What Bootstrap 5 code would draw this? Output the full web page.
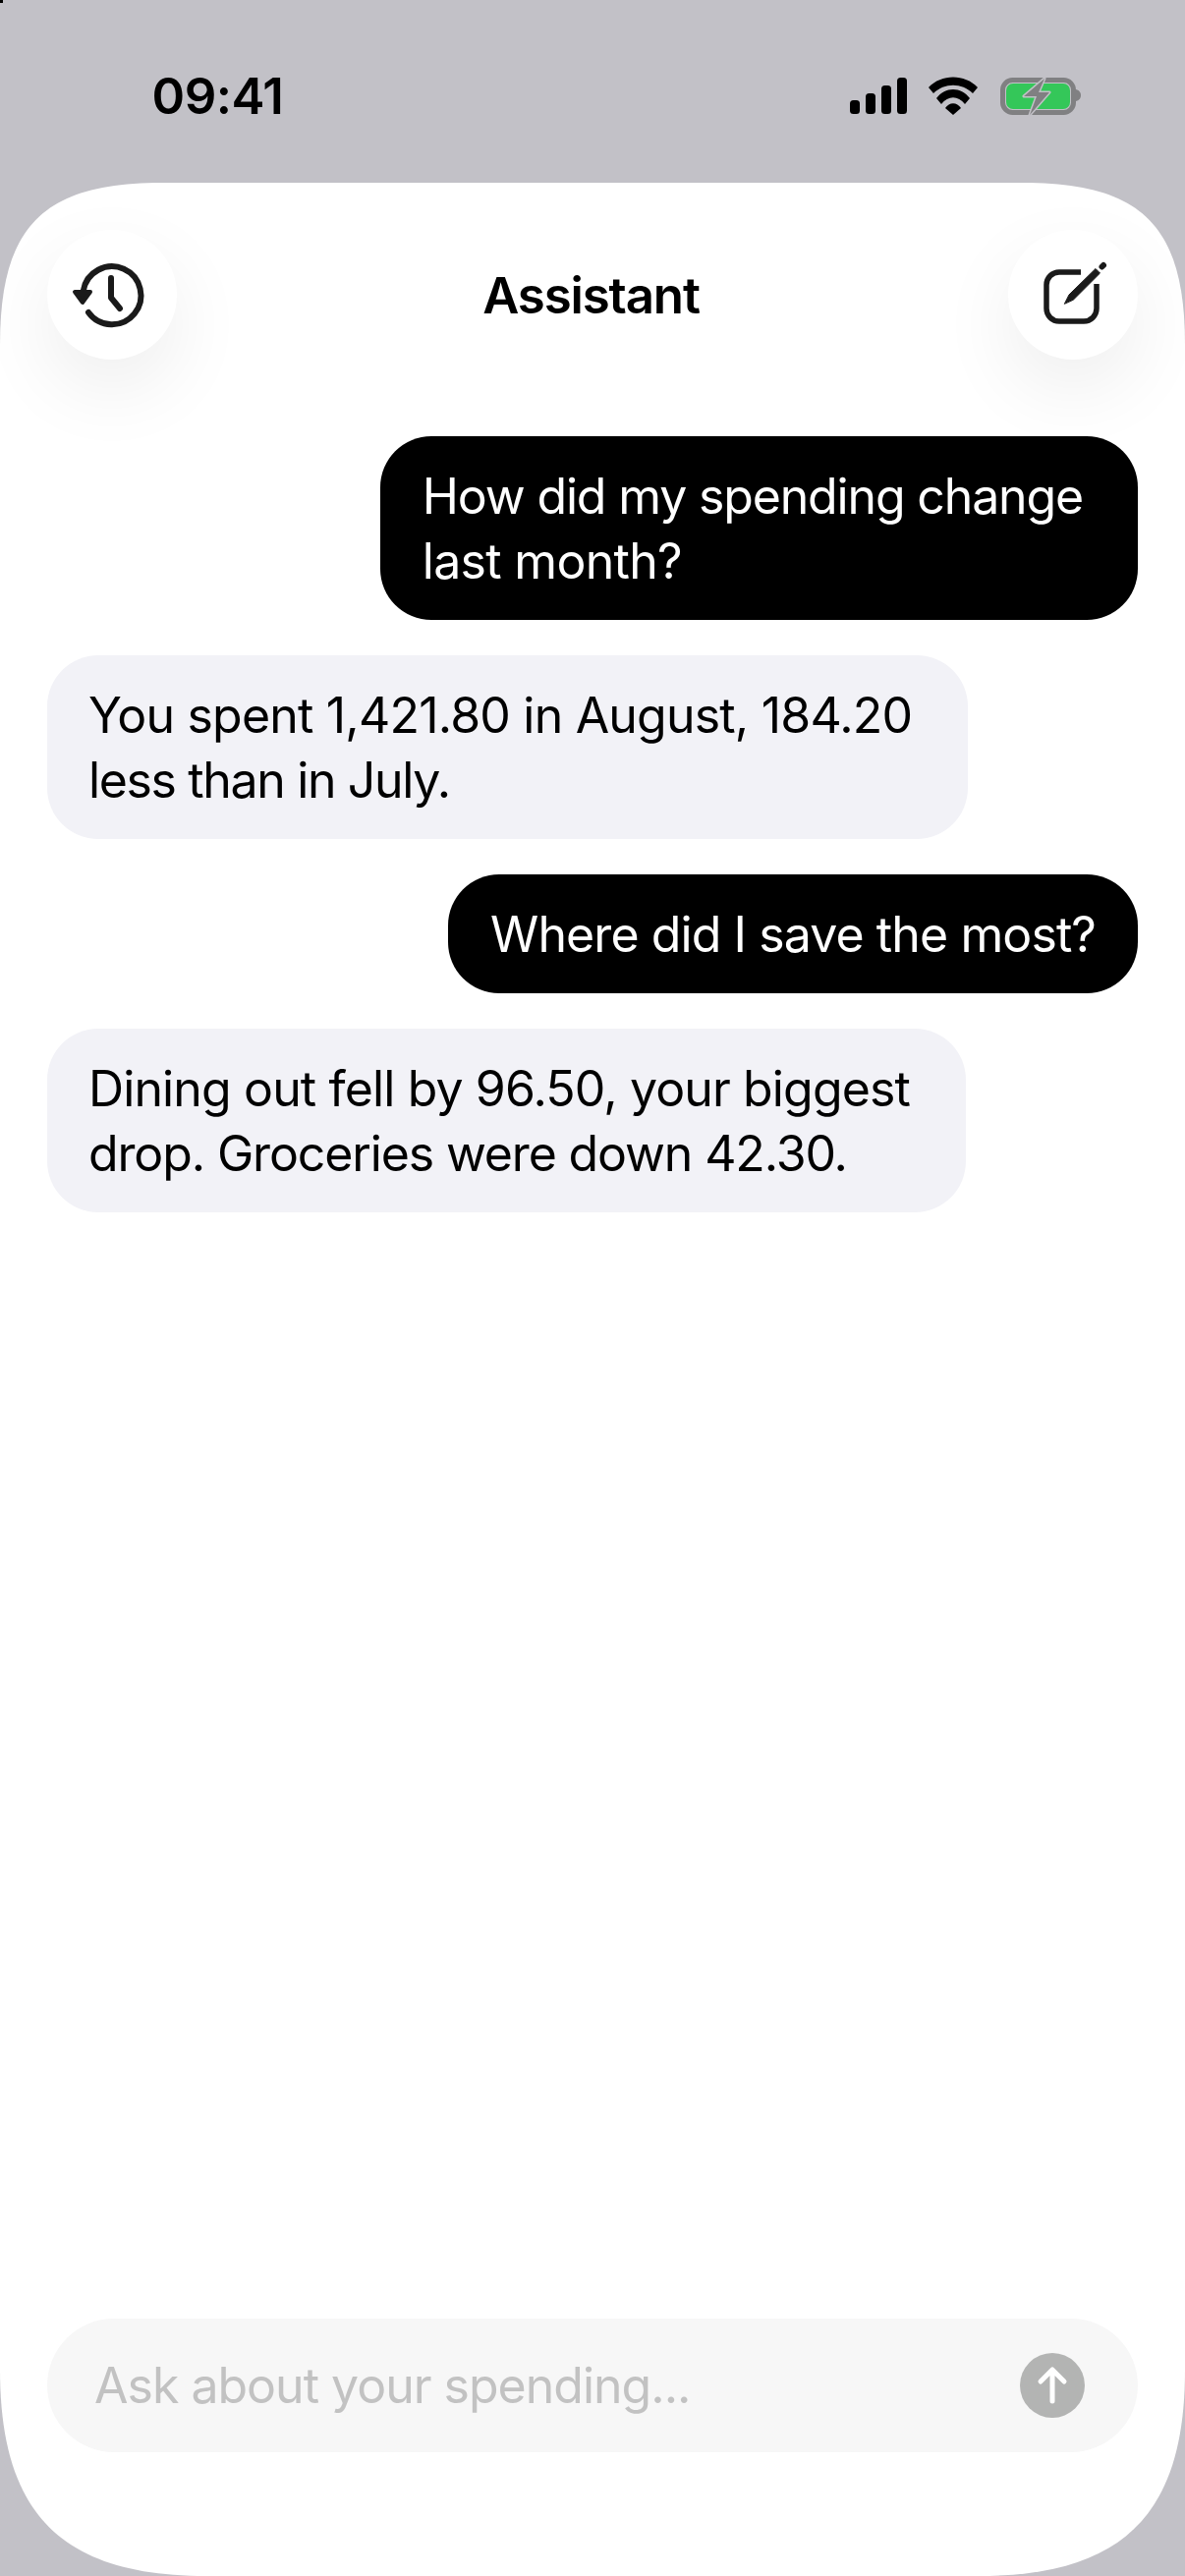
<!DOCTYPE html>
<html lang="en">
<head>
    <meta charset="UTF-8">
    <meta name="viewport" content="width=device-width, initial-scale=1">
    <title>Assistant</title>
    <link href="https://cdn.jsdelivr.net/npm/bootstrap@5.3.0/dist/css/bootstrap.min.css" rel="stylesheet">
    <style>
        html, body { height: 100%; }
        body { width: 1206px; height: 2622px; background: #c2c1c7; font-family: "Inter", "Liberation Sans", sans-serif; color: #000; overflow: hidden; position: relative; }
        .speck { position: absolute; left: 0; top: 0; width: 3px; height: 3px; background: #000; }
        .status-row { height: 186px; flex: none; padding: 0 48px 0 154.5px; }
        .status-time { font-size: 51px; font-weight: 600; line-height: 1; letter-spacing: -0.5px; margin-top: 72px; }
        .status-icons { display: block; margin-top: 78px; margin-right: 58px; }
        .sheet { background: #fff; flex: 1 1 auto; padding: 48px 48px 126px; clip-path: path("M0 2226 V165 C0 44 44 0 165 0 H1041 C1162 0 1206 44 1206 165 V2226 C1206 2373 1143 2436 996 2436 H210 C63 2436 0 2373 0 2226 Z"); }
        .round-btn { width: 132px; height: 132px; padding: 0; border: 0; background: #fff; box-shadow: 0 30px 80px rgba(0, 0, 0, 0.07); }
        .round-btn svg { display: block; }
        .sheet-title { font-size: 51px; font-weight: 600; line-height: 1; letter-spacing: -1.15px; margin-right: 3px; }
        .thread { margin-top: 78px; gap: 36px; }
        .bubble-msg { font-size: 50px; line-height: 66px; padding: 27.5px 43px; border-radius: 52px; white-space: nowrap; }
        .bubble-msg.two-line { padding-right: 56px; }
        .bubble-msg.from-bot { padding-left: 42px; padding-right: 57px; }
        .msg-a { letter-spacing: -1.15px; }
        .msg-a .line-two { letter-spacing: -0.7px; }
        .msg-b { letter-spacing: -0.8px; }
        .msg-b .line-two { letter-spacing: -1.35px; }
        .msg-c { letter-spacing: -0.9px; }
        .msg-d { letter-spacing: -0.87px; }
        .msg-d .line-two { letter-spacing: -1.13px; }
        .from-user { background: #000; color: #fff; }
        .from-bot { background: #f2f2f7; color: #000; }
        .composer { height: 136px; margin-top: auto; padding: 0 54px 0 48px; border-radius: 68px; background: #f7f7f7; }
        .composer-text { font-size: 50px; color: #c2c2c2; letter-spacing: -1px; }
        .send-btn { width: 66px; height: 66px; padding: 0; border: 0; background: #b3b4b3; }
        .send-btn svg { display: block; }
    </style>
</head>
<body class="d-flex flex-column">
    <div class="speck"></div>

    <div class="status-row d-flex justify-content-between align-items-start">
        <div class="status-time">09:41</div>
        <svg class="status-icons" width="235" height="40" viewBox="865 78 235 40" aria-hidden="true">
            <rect x="865" y="102" width="10" height="14" rx="3.5"/>
            <rect x="881" y="95" width="10" height="21" rx="3.5"/>
            <rect x="897" y="87" width="10" height="29" rx="3.5"/>
            <rect x="913" y="79" width="10" height="37" rx="3.5"/>
            <path d="M945 89 C958 75 982 75 995 89 L990 95 C979 84 961 84 950 95 Z"/>
            <path d="M953 100 C962 88 978 88 987 100 L982 106 C975 97 965 97 958 106 Z"/>
            <path d="M962 110 C966 103.5 974 103.5 978 110 L970 117 Z"/>
            <rect x="1020.5" y="81.5" width="72" height="33" rx="10" fill="none" stroke="#808082" stroke-width="5"/>
            <rect x="1024" y="85" width="65" height="26" rx="7" fill="#34c759"/>
            <path d="M1095 91 C1099 92 1100 95 1100 97 C1100 99 1099 102 1095 103 Z" fill="#808082"/>
            <path d="M1063 80 L1042 98 H1055 L1048 117 L1068 94 H1057 Z" fill="#808082" stroke="#c2c1c7" stroke-width="3" stroke-linejoin="round" paint-order="stroke"/>
        </svg>
    </div>

    <main class="sheet d-flex flex-column">
        <div class="d-flex justify-content-between align-items-center">
            <button class="round-btn rounded-circle" type="button" aria-label="History">
                <svg width="132" height="132" viewBox="0 0 132 132" fill="none" stroke="#1a1a1a" stroke-width="6" stroke-linecap="round" stroke-linejoin="round">
                    <path d="M42 84 A29.5 29.5 0 1 0 36.8 62"/>
                    <path d="M65 49 V69 L74 80"/>
                    <path d="M28 63 H44 L36 74 Z" fill="#1a1a1a" stroke-width="4"/>
                </svg>
            </button>
            <div class="sheet-title">Assistant</div>
            <button class="round-btn rounded-circle" type="button" aria-label="New chat">
                <svg width="132" height="132" viewBox="0 0 132 132" fill="none" stroke="#1a1a1a" stroke-width="5.5" stroke-linecap="round" stroke-linejoin="round">
                    <path d="M74 43 H52 A13 13 0 0 0 39 56 V80 A13 13 0 0 0 52 93 H77 A13 13 0 0 0 90 80 V55" stroke-linecap="butt"/>
                    <path d="M57.5 75 L62 66 L89 39.5 L93.5 44 L66.5 71 Z" fill="#1a1a1a" stroke-width="1"/>
                    <path d="M95.5 37.5 L97 36" stroke-width="6"/>
                </svg>
            </button>
        </div>

        <div class="thread d-flex flex-column">
            <div class="bubble-msg msg-a two-line from-user align-self-end">How did my spending change<br><span class="line-two">last month?</span></div>
            <div class="bubble-msg msg-b two-line from-bot align-self-start">You spent 1,421.80 in August, 184.20<br><span class="line-two">less than in July.</span></div>
            <div class="bubble-msg msg-c from-user align-self-end">Where did I save the most?</div>
            <div class="bubble-msg msg-d two-line from-bot align-self-start">Dining out fell by 96.50, your biggest<br><span class="line-two">drop. Groceries were down 42.30.</span></div>
        </div>

        <div class="composer d-flex align-items-center justify-content-between">
            <div class="composer-text">Ask about your spending...</div>
            <button class="send-btn rounded-circle" type="button" aria-label="Send">
                <svg width="66" height="66" viewBox="0 0 66 66" fill="none" stroke="#fff" stroke-width="5" stroke-linecap="round" stroke-linejoin="round">
                    <path d="M33 49 V18 M21 29 L33 17 L45 29"/>
                </svg>
            </button>
        </div>
    </main>

    <script src="https://cdn.jsdelivr.net/npm/bootstrap@5.3.0/dist/js/bootstrap.bundle.min.js"></script>
</body>
</html>
